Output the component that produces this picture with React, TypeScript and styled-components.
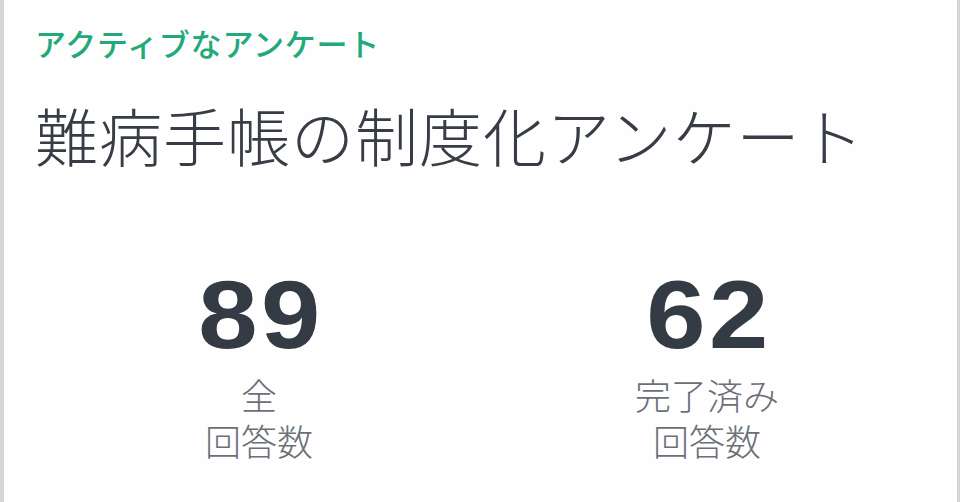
import React from "react";
import styled, { createGlobalStyle } from "styled-components";

const Global = createGlobalStyle`
  html, body { margin: 0; padding: 0; background: #ffffff; }
  body { font-family: "Noto Sans CJK JP", "Noto Sans", sans-serif; }
`;

const Card = styled.div`
  box-sizing: border-box;
  width: 960px;
  height: 502px;
  background: #fefefe;
  border-left: 4px solid #d6d6d6;
  border-right: 3px solid #d6d6d6;
  padding: 21px 30px 0 31px;
  display: flex;
  flex-direction: column;
  overflow: hidden;
`;

const Eyebrow = styled.div`
  color: #22a97a;
  font-family: "Noto Sans CJK JP", sans-serif;
  font-weight: 500;
  font-size: 31px;
  line-height: 44px;
  letter-spacing: 0.8px;
`;

const Title = styled.h1`
  margin: 29px 0 0 0;
  color: #373c45;
  font-family: "Noto Sans CJK JP", sans-serif;
  font-weight: 300;
  font-size: 63px;
  line-height: 80px;
  letter-spacing: 1px;
`;

const Stats = styled.div`
  display: grid;
  grid-template-columns: 448px 448px;
  margin-top: 95px;
`;

const Stat = styled.div`
  display: flex;
  flex-direction: column;
  align-items: center;
`;

const Value = styled.div`
  font-family: "Liberation Sans", Arial, sans-serif;
  font-weight: 700;
  font-size: 97px;
  line-height: 92px;
  letter-spacing: 3px;
  margin-right: -3px;
  transform: scaleX(1.1);
  color: #353b45;
`;

const Label = styled.div`
  margin-top: 10px;
  font-family: "Noto Sans CJK JP", sans-serif;
  font-weight: 300;
  font-size: 36px;
  line-height: 46px;
  color: #6c7076;
  text-align: center;
`;

export default function App() {
  return (
    <>
      <Global />
      <Card>
        <Eyebrow>アクティブなアンケート</Eyebrow>
        <Title>難病手帳の制度化アンケート</Title>
        <Stats>
          <Stat>
            <Value>89</Value>
            <Label>
              全<br />回答数
            </Label>
          </Stat>
          <Stat>
            <Value>62</Value>
            <Label>
              完了済み<br />回答数
            </Label>
          </Stat>
        </Stats>
      </Card>
    </>
  );
}
